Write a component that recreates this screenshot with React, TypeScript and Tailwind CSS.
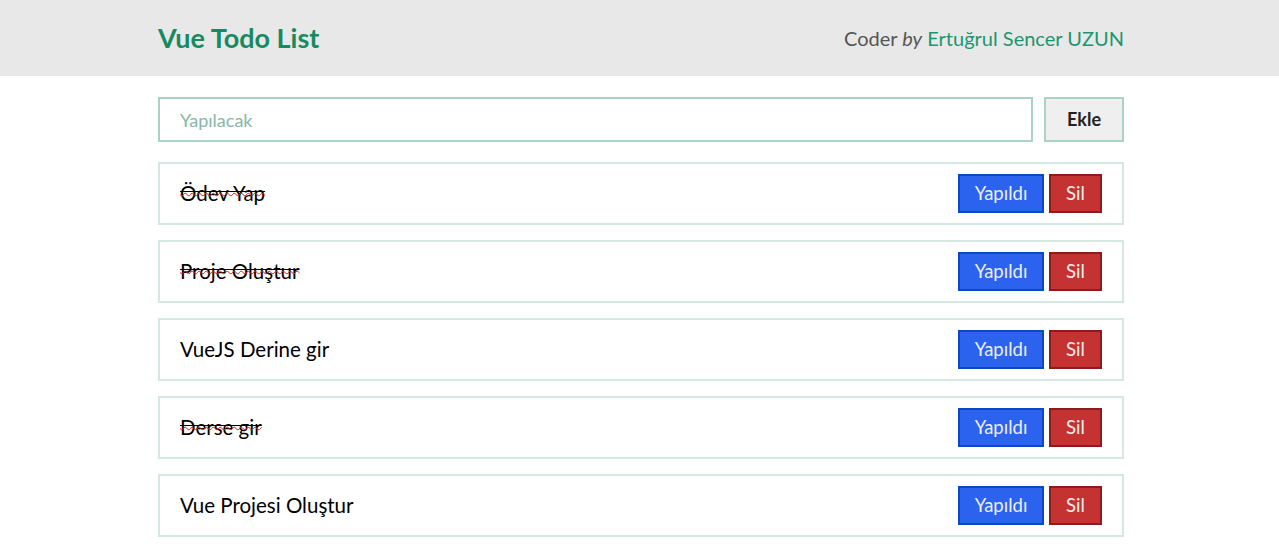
import React from "react";

const todos = [
  { text: "Ödev Yap", done: true },
  { text: "Proje Oluştur", done: true },
  { text: "VueJS Derine gir", done: false },
  { text: "Derse gir", done: true },
  { text: "Vue Projesi Oluştur", done: false },
];

export default function App() {
  return (
    <div className="min-h-[558px] bg-white" style={{ fontFamily: "Lato, 'Open Sans', sans-serif" }}>
      <header className="h-[76px] bg-[#e8e8e8] pl-[3px]">
        <div className="mx-auto flex h-full w-[966px] items-center justify-between">
          <h1 className="text-[27px] font-bold text-[#178a62]">Vue Todo List</h1>
          <p className="text-[20px] text-[#555]">
            Coder <span className="italic">by</span>{" "}
            <span className="text-[#1b9670]">Ertuğrul Sencer UZUN</span>
          </p>
        </div>
      </header>
      <main className="pl-[3px] pt-[21px]">
        <div className="mx-auto w-[966px]">
          <div className="flex gap-[11px]">
            <input
              placeholder="Yapılacak"
              className="h-[45px] flex-1 border-2 border-[#a9d3c5] bg-white px-5 text-[18px] text-black outline-none placeholder:text-[#86b8a8]"
            />
            <button className="h-[45px] w-[80px] border-2 border-[#a9d3c5] bg-[#efefef] text-[18px] font-bold text-[#222]">
              Ekle
            </button>
          </div>
          <ul className="mt-[20px] flex flex-col gap-[15px]">
            {todos.map((t) => (
              <li
                key={t.text}
                className="flex h-[63px] items-center justify-between border-2 border-[#d3e8e1] pl-5 pr-5"
              >
                <span className="text-[20.5px] text-black">
                  {t.done ? (
                    <span className="line-through decoration-[#e01b1b] decoration-wavy decoration-1">
                      <span className="underline decoration-black decoration-1 underline-offset-[-10px] [text-decoration-skip-ink:none]">
                        {t.text}
                      </span>
                    </span>
                  ) : (
                    t.text
                  )}
                </span>
                <div className="flex gap-[5px]">
                  <button className="h-[39px] w-[86px] border-2 border-[#0e47c6] bg-[#2b63ee] text-[18.5px] text-[#eef]">
                    Yapıldı
                  </button>
                  <button className="h-[39px] w-[53px] border-2 border-[#8c1c1c] bg-[#c53232] text-[18.5px] text-[#fee]">
                    Sil
                  </button>
                </div>
              </li>
            ))}
          </ul>
        </div>
      </main>
    </div>
  );
}
